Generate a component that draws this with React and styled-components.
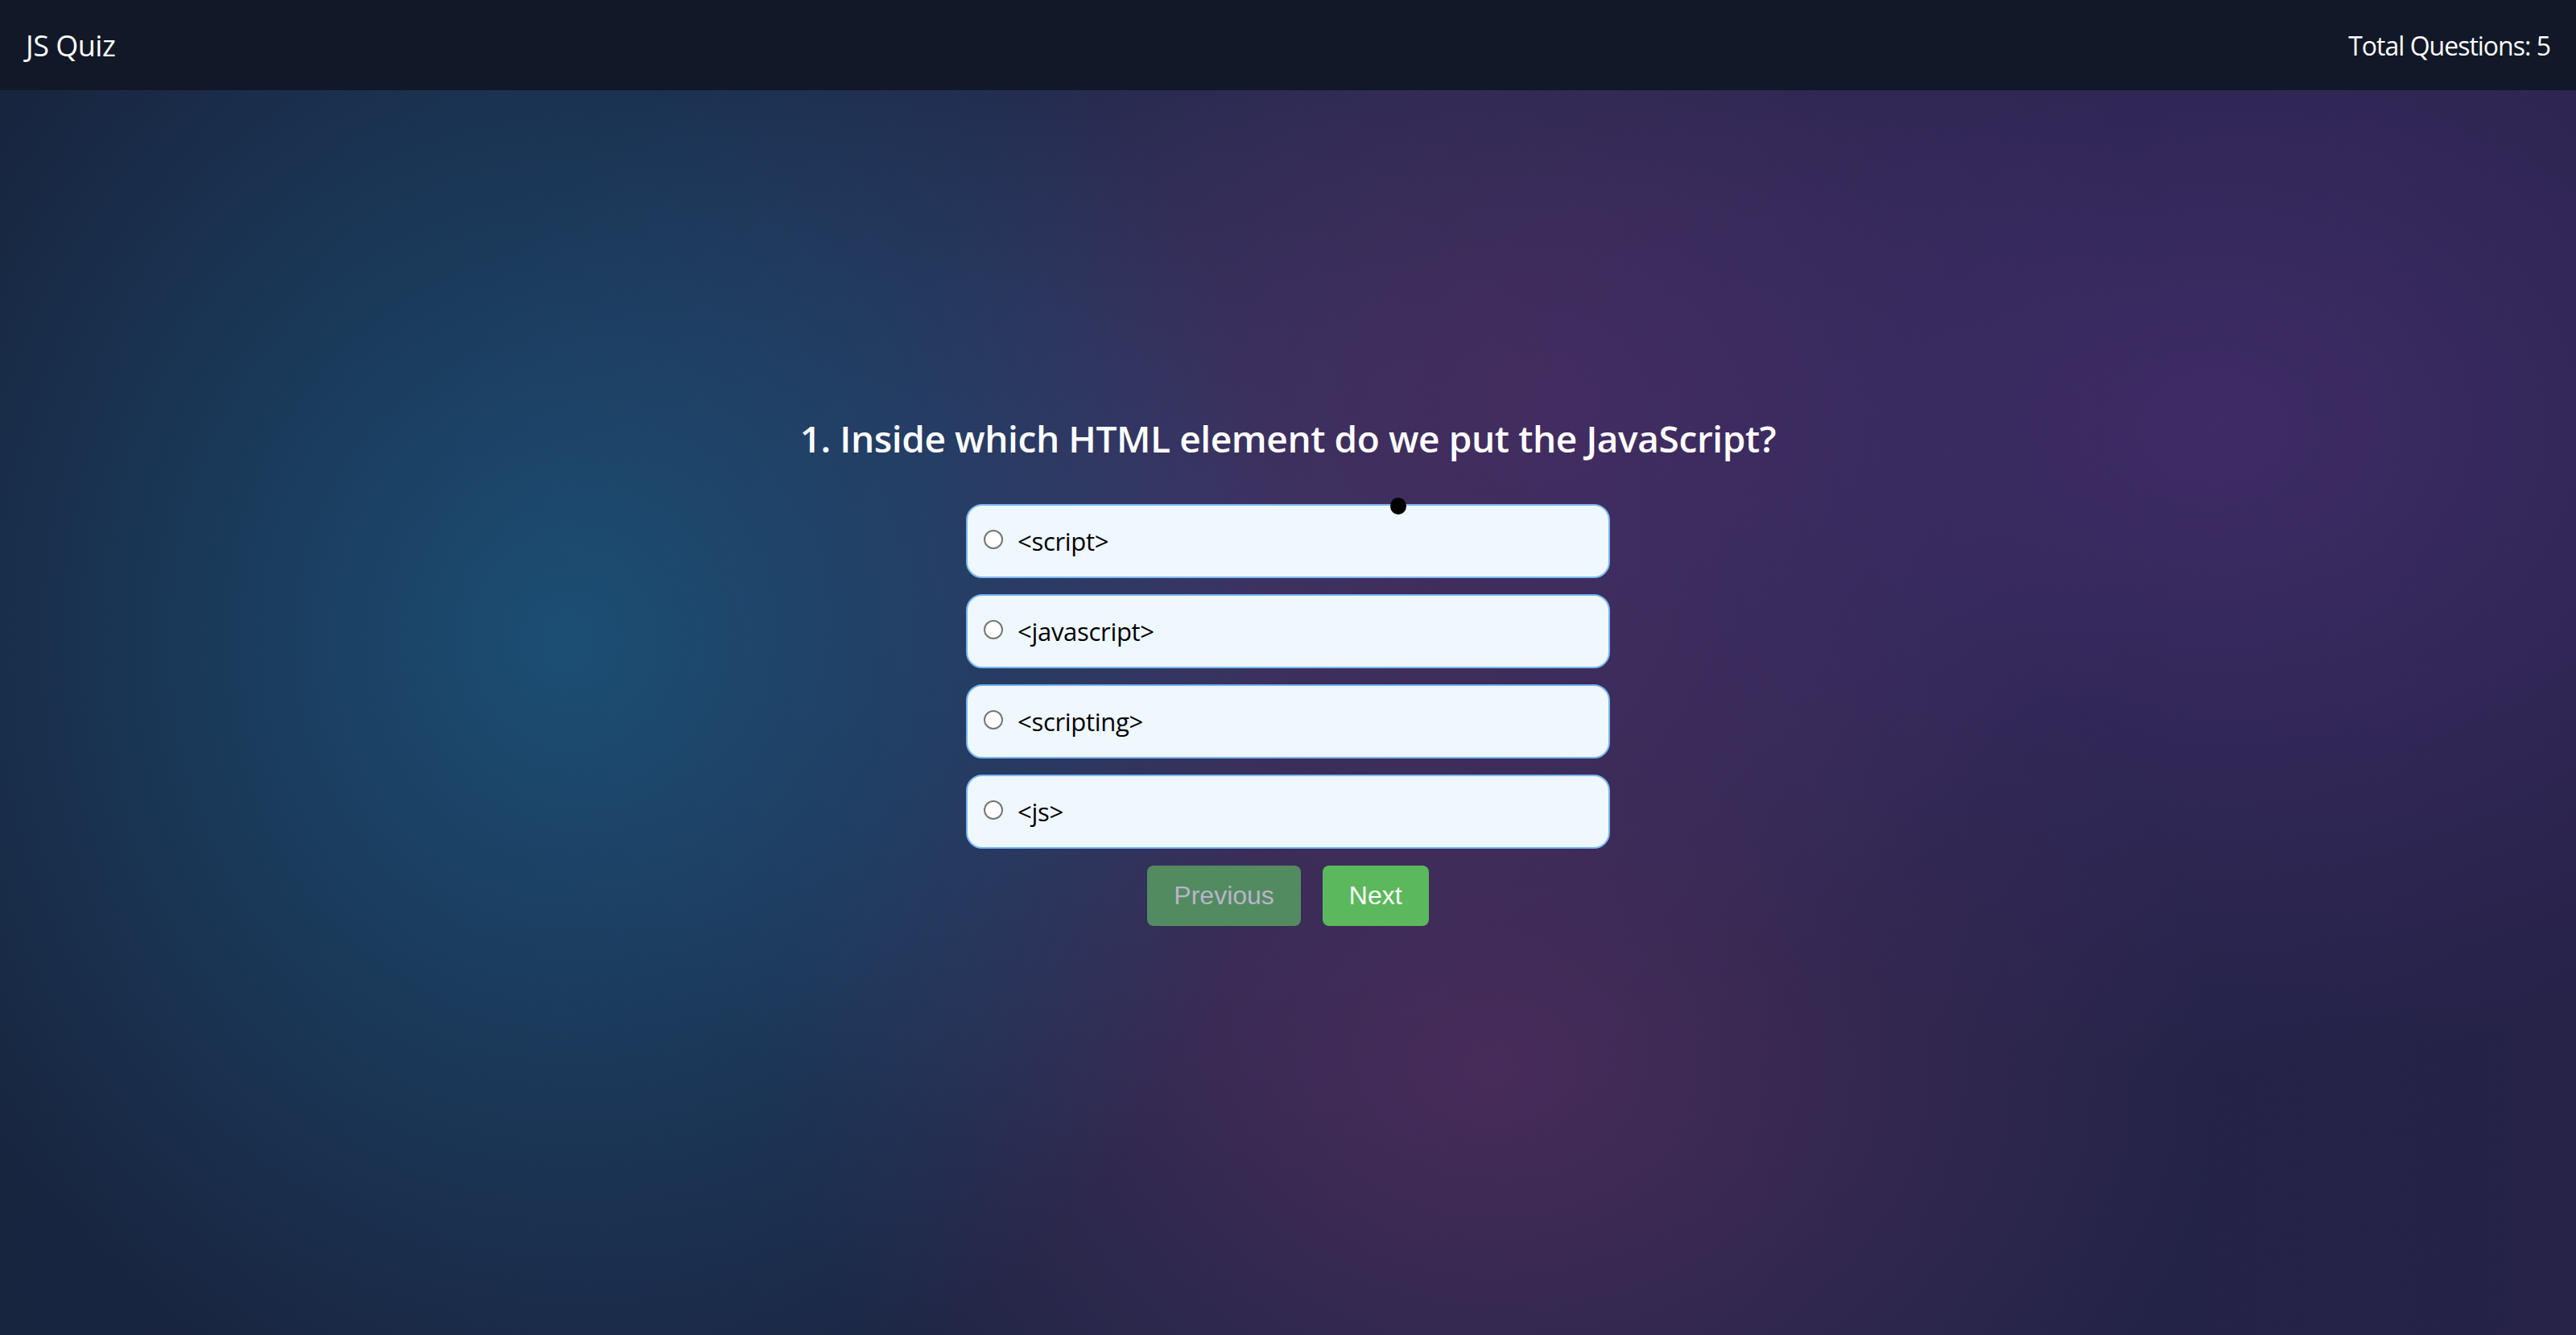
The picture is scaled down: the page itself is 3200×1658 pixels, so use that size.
import React from "react";
import styled, { createGlobalStyle } from "styled-components";

const questions = [
    {
        question: "Inside which HTML element do we put the JavaScript?",
        options: ["<script>", "<javascript>", "<scripting>", "<js>"],
    },
];

export default function App() {

    const [current] = React.useState(0);
    const [picked, setPicked] = React.useState(null);

    const q = questions[current];

    return (
        <>
            <GlobalStyle />
            <Page>
                <Header>
                    <Brand>JS Quiz</Brand>
                    <Total>Total Questions: 5</Total>
                </Header>
                <Main>
                    <Question>{current + 1}. {q.question}</Question>
                    <Options>
                        {q.options.map((opt, i) => (
                            <Option key={opt}>
                                <Radio type="radio" name="answer" checked={picked === i}
                                    onChange={() => setPicked(i)} />
                                <OptionText>{opt}</OptionText>
                                {i === 0 && <Cursor />}
                            </Option>
                        ))}
                    </Options>
                    <Buttons>
                        <NavButton disabled>Previous</NavButton>
                        <NavButton>Next</NavButton>
                    </Buttons>
                </Main>
            </Page>
        </>
    );
};

const GlobalStyle = createGlobalStyle`
    html, body {
        margin: 0;
        padding: 0;
    }
    * {
        box-sizing: border-box;
    }
`;

const Page = styled.div`
    min-height: 100vh;
    display: flex;
    flex-direction: column;
    font-family: "Open Sans", "Noto Sans", sans-serif;
    background-color: #1d2343;
    background-image:
        radial-gradient(ellipse 900px 1000px at 22% 48%, rgba(28, 80, 118, 0.95), rgba(28, 80, 118, 0) 100%),
        radial-gradient(ellipse 1000px 800px at 86% 32%, rgba(64, 44, 104, 0.95), rgba(64, 44, 104, 0) 100%),
        radial-gradient(ellipse 800px 700px at 60% 30%, rgba(72, 44, 96, 0.85), rgba(72, 44, 96, 0) 100%),
        radial-gradient(ellipse 900px 700px at 58% 80%, rgba(76, 44, 92, 0.9), rgba(76, 44, 92, 0) 100%),
        radial-gradient(ellipse 1000px 800px at 48% 40%, rgba(56, 56, 102, 0.9), rgba(56, 56, 102, 0) 100%),
        linear-gradient(90deg, #18253f 0%, #1e2646 50%, #262248 100%);
`;

const Header = styled.header`
    height: 112px;
    padding: 0 32px;
    display: flex;
    align-items: center;
    justify-content: space-between;
    background-color: #111827;
    color: #ffffff;
`;

const Brand = styled.div`
    font-size: 36px;
    letter-spacing: -0.5px;
`;

const Total = styled.div`
    font-size: 32px;
    letter-spacing: -1px;
`;

const Main = styled.main`
    display: flex;
    flex-direction: column;
    align-items: center;
    padding-top: 402px;
`;

const Question = styled.h2`
    margin: 0 0 52px;
    color: #ffffff;
    font-size: 46px;
    font-weight: 600;
    line-height: 60px;
    letter-spacing: -0.4px;
`;

const Options = styled.div`
    width: 800px;
    display: flex;
    flex-direction: column;
    gap: 20px;
`;

const Option = styled.label`
    position: relative;
    height: 92px;
    padding: 0 20px;
    display: flex;
    align-items: center;
    border: 2px solid #7bb8f2;
    border-radius: 20px;
    background-color: #eff7ff;
    cursor: pointer;
`;

const Radio = styled.input`
    appearance: none;
    width: 24px;
    height: 24px;
    margin: -4px 18px 0 0;
    border: 2px solid #767676;
    border-radius: 50%;
    background-color: #ffffff;
    cursor: pointer;

    &:checked {
        border-color: #0075ff;
        box-shadow: inset 0 0 0 4px #ffffff;
        background-color: #0075ff;
    }
`;

const OptionText = styled.span`
    font-size: 31px;
    line-height: 48px;
    color: #000000;
    letter-spacing: -0.3px;
`;

const Cursor = styled.span`
    position: absolute;
    left: 525px;
    top: -10px;
    width: 20px;
    height: 21px;
    border-radius: 50%;
    background-color: #000000;
`;

const Buttons = styled.div`
    display: flex;
    gap: 27px;
    margin-top: 21px;
`;

const NavButton = styled.button`
    height: 75px;
    padding: 0 33px;
    border: none;
    border-radius: 8px;
    font-family: "Liberation Sans", Arial, sans-serif;
    font-size: 32px;
    color: #ffffff;
    background-color: #5cb85c;
    cursor: pointer;

    &:disabled {
        background-color: #528b60;
        color: #b9b4c9;
        cursor: not-allowed;
    }
`;
